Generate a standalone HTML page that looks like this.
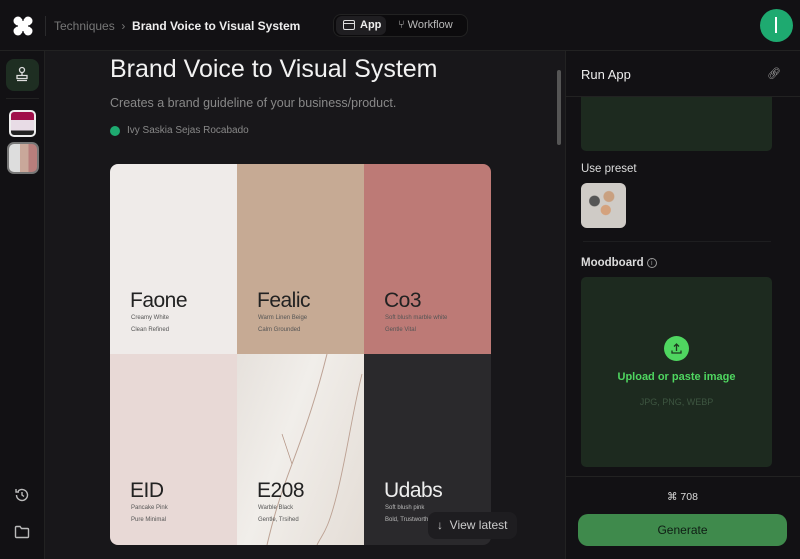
<!DOCTYPE html>
<html><head><meta charset="utf-8"><style>
*{margin:0;padding:0;box-sizing:border-box}
body{width:800px;height:559px;background:#18171a;font-family:"Liberation Sans",sans-serif;position:relative;overflow:hidden;color:#eee}
.a{position:absolute}
.cell{position:absolute;width:127px;height:191px}
.cell .t{position:absolute;left:20px;font-size:21px;color:#222;letter-spacing:-0.5px}
.cell .s{position:absolute;left:21px;font-size:6px;color:#555;line-height:12px}
</style></head><body>
<div class="a" style="left:0;top:0;width:800px;height:51px;background:#121114;border-bottom:1px solid #222"></div>
<svg class="a" style="left:13px;top:16px" width="20" height="20" viewBox="0 0 20 20"><g fill="#fff"><circle cx="5" cy="5" r="4.5"/><circle cx="15" cy="5" r="4.5"/><circle cx="5" cy="15" r="4.5"/><circle cx="15" cy="15" r="4.5"/><rect x="5" y="5" width="10" height="10"/></g><g fill="#121114"><circle cx="10" cy="0.5" r="2.5"/><circle cx="10" cy="19.5" r="2.5"/><circle cx="0.5" cy="10" r="2.5"/><circle cx="19.5" cy="10" r="2.5"/></g></svg>
<div class="a" style="left:45px;top:16px;width:1px;height:20px;background:#2a2a2c"></div>
<div class="a" style="left:54px;top:19px;font-size:12px;color:#777">Techniques &nbsp;›&nbsp; <span style="color:#eee;font-weight:bold">Brand Voice to Visual System</span></div>
<div class="a" style="left:333px;top:14px;width:135px;height:23px;border-radius:8px;background:#0c0b0d;border:1px solid #222"></div>
<div class="a" style="left:336px;top:16px;width:50px;height:19px;border-radius:6px;background:#1f1e21"></div>
<svg class="a" style="left:343px;top:20px" width="12" height="11"><rect x="0.5" y="0.5" width="11" height="9" rx="1.5" fill="none" stroke="#ddd"/><line x1="1" y1="3.5" x2="11" y2="3.5" stroke="#ddd"/></svg>
<div class="a" style="left:360px;top:19px;font-size:11px;font-weight:bold;color:#eee">App</div>
<div class="a" style="left:398px;top:19px;font-size:11px;color:#bbb">⑂ Workflow</div>
<div class="a" style="left:760px;top:9px;width:33px;height:33px;border-radius:50%;background:#1eaa70"></div>
<div class="a" style="left:775px;top:17px;width:2px;height:16px;background:#fff"></div>
<div class="a" style="left:0;top:51px;width:45px;height:508px;background:#121114;border-right:1px solid #222"></div>
<div class="a" style="left:6px;top:59px;width:33px;height:32px;border-radius:8px;background:#1e2e22"></div>
<svg class="a" style="left:14px;top:66px" width="16" height="16" viewBox="0 0 16 16" fill="none" stroke="#ddd" stroke-width="1.3"><circle cx="8" cy="4" r="2.5"/><path d="M8 6.5v3M3 9.5h10v3H3z M3 14.5h10"/></svg>
<div class="a" style="left:6px;top:98px;width:33px;height:1px;background:#222"></div>
<div class="a" style="left:9px;top:110px;width:27px;height:27px;border-radius:5px;background:linear-gradient(180deg,#a0104a 0 35%,#e8dce6 35% 80%,#222 80%);border:2px solid #eee"></div>
<div class="a" style="left:7px;top:142px;width:32px;height:32px;border-radius:7px;background:linear-gradient(90deg,#ddd 0 40%,#c9a89a 40% 70%,#b87e7c 70%);border:2px solid #777"></div>
<svg class="a" style="left:14px;top:487px" width="16" height="16" viewBox="0 0 16 16" fill="none" stroke="#bbb" stroke-width="1.4"><path d="M2.5 8a5.5 5.5 0 1 0 1.6-3.9M2 2v3h3M8 5v3l2 1.5"/></svg>
<svg class="a" style="left:14px;top:525px" width="16" height="14" viewBox="0 0 16 14" fill="none" stroke="#bbb" stroke-width="1.4"><path d="M1.5 2.5a1 1 0 0 1 1-1h3.5l1.5 2h6a1 1 0 0 1 1 1v7a1 1 0 0 1-1 1h-11a1 1 0 0 1-1-1z"/></svg>
<div class="a" style="left:110px;top:55px;font-size:25px;color:#f2f2f2">Brand Voice to Visual System</div>
<div class="a" style="left:110px;top:96px;font-size:12.5px;color:#888">Creates a brand guideline of your business/product.</div>
<div class="a" style="left:110px;top:126px;width:10px;height:10px;border-radius:50%;background:#1eaa70"></div>
<div class="a" style="left:127px;top:125px;font-size:10px;color:#888">Ivy Saskia Sejas Rocabado</div>
<div class="a" style="left:557px;top:70px;width:4px;height:75px;border-radius:2px;background:#555"></div>
<div class="a" style="left:110px;top:164px;width:381px;height:381px;border-radius:8px;overflow:hidden">
 <div class="cell" style="left:0;top:0;height:190px;background:#efebe9"><div class="t" style="top:125px">Faone</div><div class="s" style="top:148px">Creamy White<br>Clean Refined</div></div>
 <div class="cell" style="left:127px;top:0;height:190px;background:#c6aa94"><div class="t" style="top:125px">Fealic</div><div class="s" style="top:148px">Warm Linen Beige<br>Calm Grounded</div></div>
 <div class="cell" style="left:254px;top:0;height:190px;background:#bd7a76"><div class="t" style="top:125px">Co3</div><div class="s" style="top:148px">Soft blush marble white<br>Gentle Vital</div></div>
 <div class="cell" style="left:0;top:190px;background:#e8d9d6"><div class="t" style="top:125px">EID</div><div class="s" style="top:148px">Pancake Pink<br>Pure Minimal</div></div>
 <div class="cell" style="left:127px;top:190px;background:linear-gradient(110deg,#e6e1dc,#f1eeea 40%,#e4ddd6)">
  <svg class="a" style="left:0;top:0" width="127" height="191"><path d="M90 0 C80 40 70 70 55 110 S35 170 30 191" stroke="#b09080" stroke-width="1" fill="none" opacity="0.8"/><path d="M125 20 C115 60 110 100 100 140 S85 180 80 191" stroke="#b09080" stroke-width="0.9" fill="none" opacity="0.8"/><path d="M55 110 L45 80" stroke="#b09080" stroke-width="0.7" fill="none"/></svg>
  <div class="t" style="top:125px">E208</div><div class="s" style="top:148px">Warble Black<br>Gentle, Trsihed</div></div>
 <div class="cell" style="left:254px;top:190px;background:#2a292c"><div class="t" style="top:125px;color:#eee">Udabs</div><div class="s" style="top:148px;color:#bbb">Soft blush pink<br>Bold, Trustworthy</div></div>
</div>
<div class="a" style="left:428px;top:512px;width:89px;height:27px;border-radius:8px;background:#1e1d20;color:#ccc;font-size:12px;line-height:27px;padding-left:9px">↓&nbsp; View latest</div>
<div class="a" style="left:565px;top:51px;width:235px;height:508px;background:#121114;border-left:1px solid #222"></div>
<div class="a" style="left:581px;top:67px;font-size:13px;color:#eee">Run App</div>
<div class="a" style="left:767px;top:67px;font-size:11px;color:#aaa">🔗︎</div>
<div class="a" style="left:566px;top:96px;width:234px;height:1px;background:#222"></div>
<div class="a" style="left:581px;top:97px;width:191px;height:54px;border-radius:0 0 5px 5px;background:#1d2a1f"></div>
<div class="a" style="left:581px;top:163px;font-size:11.5px;color:#ddd">Use preset</div>
<div class="a" style="left:581px;top:183px;width:45px;height:45px;border-radius:6px;background:radial-gradient(circle at 30% 40%,#555 0 12%,transparent 14%),radial-gradient(circle at 55% 60%,#d4a27d 0 13%,transparent 15%),radial-gradient(circle at 62% 30%,#c9a080 0 12%,transparent 14%),#cfcbc6"></div>
<div class="a" style="left:583px;top:241px;width:188px;height:1px;background:#1e1e20"></div>
<div class="a" style="left:581px;top:257px;font-size:11.5px;color:#ddd;font-weight:bold">Moodboard <span style="display:inline-block;width:10px;height:10px;border:1px solid #999;border-radius:50%;font-size:7px;text-align:center;line-height:9px;color:#999;vertical-align:1px;font-weight:normal">i</span></div>
<div class="a" style="left:581px;top:277px;width:191px;height:190px;border-radius:5px;background:#1d2a1f"></div>
<div class="a" style="left:664px;top:336px;width:25px;height:25px;border-radius:50%;background:#4fd660"></div>
<svg class="a" style="left:670px;top:342px" width="13" height="13" viewBox="0 0 13 13" fill="none" stroke="#1d3a1f" stroke-width="1.3"><path d="M6.5 9V2M4 4.5l2.5-2.5 2.5 2.5M2 8.5v2.5h9V8.5"/></svg>
<div class="a" style="left:581px;top:371px;width:191px;text-align:center;font-size:11px;color:#4fd660;font-weight:bold">Upload or paste image</div>
<div class="a" style="left:581px;top:397px;width:191px;text-align:center;font-size:9px;color:#3d5540">JPG, PNG, WEBP</div>
<div class="a" style="left:566px;top:476px;width:234px;height:1px;background:#222"></div>
<div class="a" style="left:667px;top:491px;font-size:10.5px;color:#ddd">⌘ 708</div>
<div class="a" style="left:578px;top:514px;width:209px;height:32px;border-radius:10px;background:#3f8a4c;color:#0f1d14;font-size:12px;text-align:center;line-height:32px">Generate</div>
</body></html>
